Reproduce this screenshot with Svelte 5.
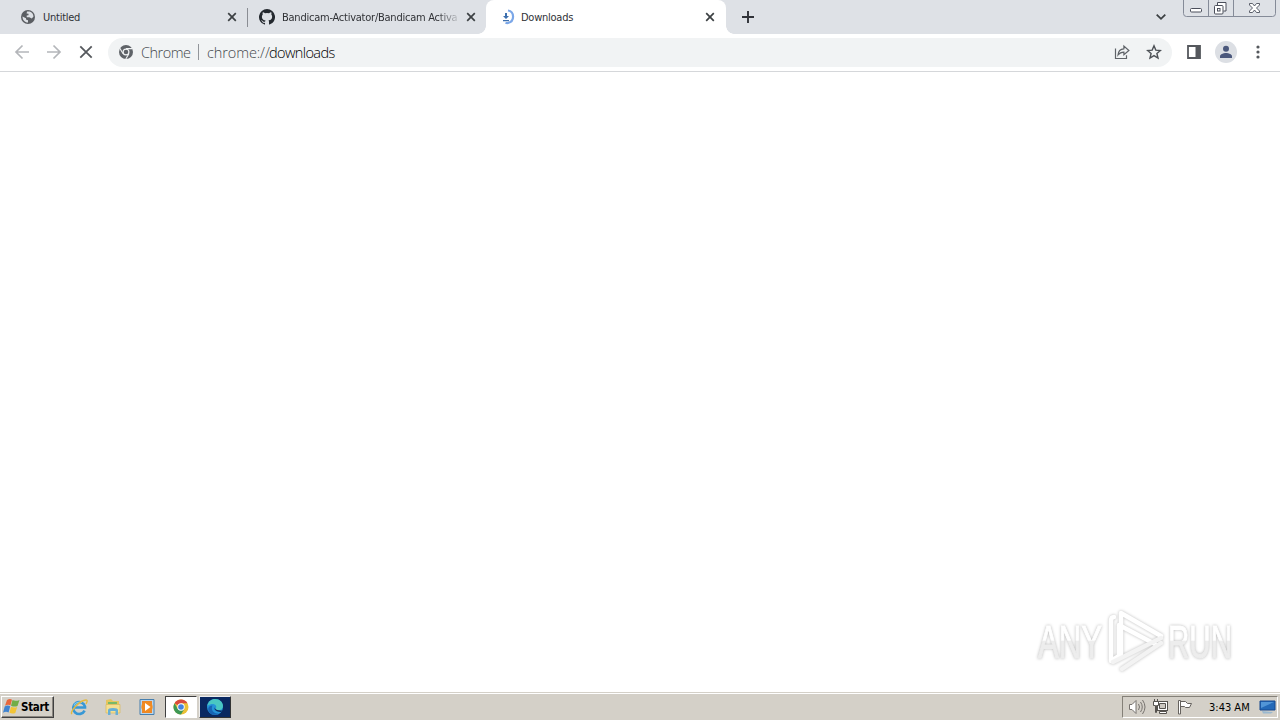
<script>
	const tabs = [
		{ title: 'Untitled', icon: 'globe' },
		{ title: 'Bandicam-Activator/Bandicam Activa', icon: 'github' },
		{ title: 'Downloads', icon: 'loading', active: true },
	];
	const url = { scheme: 'chrome://', page: 'downloads' };
	const time = '3:43 AM';
</script>

<div class="screen">
	<header class="tabs">
		{#each tabs as tab}
			<div class="tab {tab.icon}" class:active={tab.active}>
				<svg class="favicon" width="16" height="16" viewBox="0 0 16 16">
					{#if tab.icon === 'globe'}
						<circle cx="8" cy="8" r="7" fill="#5b5e63" />
						<path
							d="M2.5 7.5 6 9.3v1.2l2 .8v2.2C4.8 13.5 2.5 11 2.5 7.5ZM7 2.6l2.7-.1c2.2.8 3.6 2.5 3.8 5l-1.7 1.9-2.5-1.2H6.7V6.6l1.8-.4V4.7L6.6 4.4Z"
							fill="#dee1e6"
						/>
					{:else if tab.icon === 'github'}
						<path
							d="M8 0a8 8 0 0 0-2.53 15.59c.4.07.55-.17.55-.38v-1.34c-2.22.48-2.69-1.07-2.69-1.07-.36-.92-.89-1.17-.89-1.17-.73-.5.05-.49.05-.49.8.06 1.23.83 1.23.83.71 1.22 1.87.87 2.33.66.07-.52.28-.87.5-1.07-1.77-.2-3.63-.89-3.63-3.95 0-.87.31-1.59.82-2.15-.08-.2-.36-1.01.08-2.12 0 0 .67-.21 2.2.82a7.6 7.6 0 0 1 4 0c1.53-1.03 2.2-.82 2.2-.82.44 1.11.16 1.92.08 2.12.51.56.82 1.28.82 2.15 0 3.07-1.87 3.75-3.65 3.95.29.25.54.73.54 1.48v2.17c0 .21.15.46.55.38A8 8 0 0 0 8 0Z"
							fill="#24292f"
						/>
					{:else}
						<path d="M8 1.5c6.5 1 7 11 0 12.5q-1.3.2-2.5-.3" fill="none" stroke="#7ba7e8" stroke-width="2.2" />
						<path d="M5 4h2v3h2l-3 3-3-3h2ZM3 11h6v1.2H3Z" fill="#3c6fae" />
					{/if}
				</svg>
				<span class="title">{tab.title}</span>
				<svg class="close" width="10" height="10" viewBox="0 0 10 10">
					<path d="m1.2 1.2 7.6 7.6m0-7.6L1.2 8.8" stroke="#3c4043" stroke-width="1.7" />
				</svg>
			</div>
		{/each}
		<svg class="plus" width="14" height="14" viewBox="0 0 14 14">
			<path d="M7 1v12M1 7h12" stroke="#303238" stroke-width="1.9" />
		</svg>
		<svg class="chevron" width="12" height="8" viewBox="0 0 12 8">
			<path d="m1.7 1.6 4.3 4.2 4.3-4.2" fill="none" stroke="#3c4043" stroke-width="1.8" />
		</svg>
		<div class="window-buttons">
			<svg width="93" height="17" viewBox="0 0 93 17" fill="none" stroke="#4b4f5b">
				<path d="M.5 0v13.5q0 3 3 3h86q3 0 3-3V0" stroke="#858b98" />
				<path d="M25.5 0v16M50.5 0v16" stroke="#858b98" />
				<rect x="7.5" y="8.5" width="11" height="3.5" rx="1" fill="#fff" />
				<path d="M34.5 5V2.5h8.5v8.5h-2.5" fill="#fff" />
				<rect x="31.5" y="5.5" width="8.5" height="8.5" rx="1" fill="#fff" />
				<rect x="34.5" y="8.5" width="2.5" height="2.5" />
				<path
					d="M66.5 3.5h3l2 2.5 2-2.5h3V5l-3 3 3 3v1.5h-3l-2-2.5-2 2.5h-3V11l3-3-3-3Z"
					fill="#fff"
					stroke-width=".9"
				/>
			</svg>
		</div>
	</header>

	<nav class="toolbar">
		<div class="nav-icons">
			<svg width="16" height="16" viewBox="0 0 16 16" fill="none" stroke="#b4b6ba" stroke-width="1.7">
				<path d="M15 8H2m6.5-6.5L2 8l6.5 6.5" />
			</svg>
			<svg width="16" height="16" viewBox="0 0 16 16" fill="none" stroke="#b4b6ba" stroke-width="1.7">
				<path d="M1 8h13M7.5 1.5 14 8l-6.5 6.5" />
			</svg>
			<svg width="16" height="16" viewBox="0 0 16 16" fill="none" stroke="#55585d" stroke-width="1.8">
				<path d="m2.3 2.3 11.4 11.4m0-11.4L2.3 13.7" />
			</svg>
		</div>
		<div class="address">
			<svg class="origin" width="14" height="14" viewBox="0 0 14 14">
				<circle cx="7" cy="7" r="7" fill="#5f6368" />
				<path d="M7 3.6h6.5M4.1 8.7.8 3.2m9.1 5.5L6.8 14" stroke="#f1f3f4" stroke-width="1.1" />
				<circle cx="7" cy="7" r="2.9" fill="#5f6368" stroke="#f1f3f4" stroke-width="1.2" />
			</svg>
			<span class="label">Chrome</span>
			<span class="rule"></span>
			<span class="scheme">{url.scheme}</span><span class="page">{url.page}</span>
			<svg class="share" width="16" height="16" viewBox="0 0 16 16" fill="none" stroke="#5f6368" stroke-width="1.2">
				<path d="M1.5 4.5v10h11v-3.3M4 11c.3-4 2.2-6 5.9-6.2V2l5 4.5-5 4.3V8.1C7.3 8.1 5.5 9 4 11Z" />
			</svg>
			<svg class="star" width="16" height="16" viewBox="0 0 16 16" fill="none" stroke="#4d5156" stroke-width="1.4">
				<path d="m8 1.8 1.8 4.3 4.6.4-3.5 3 1.1 4.5-4-2.4L4 14l1.1-4.5-3.5-3 4.6-.4Z" />
			</svg>
		</div>
		<svg class="panel" width="14" height="14" viewBox="0 0 14 14">
			<path d="M1 1h12v12H1Z" fill="none" stroke="#55585d" stroke-width="1.8" />
			<path d="M8.5 1H13v12H8.5Z" fill="#55585d" />
		</svg>
		<svg class="avatar" width="22" height="22" viewBox="0 0 22 22">
			<circle cx="11" cy="11" r="11" fill="#dcdfe4" />
			<circle cx="11" cy="7.8" r="3" fill="#4b587c" />
			<path d="M5 17v-1.7c0-2 3.5-3.3 6-3.3s6 1.3 6 3.3V17Z" fill="#4b587c" />
		</svg>
		<svg class="more" width="4" height="14" viewBox="0 0 4 14" fill="#55585d">
			<circle cx="2" cy="2" r="1.6" />
			<circle cx="2" cy="7" r="1.6" />
			<circle cx="2" cy="12" r="1.6" />
		</svg>
	</nav>

	<main>
		<svg class="watermark" width="206" height="72" viewBox="0 0 206 72">
			<defs>
				<linearGradient id="shade" x1="0" y1="0" x2="0" y2="72" gradientUnits="userSpaceOnUse">
					<stop offset=".49" stop-color="#fff" />
					<stop offset=".5" stop-color="#ededed" />
				</linearGradient>
			</defs>
			<g class="letters" fill="url(#shade)" stroke="url(#shade)">
				<text x="5" y="53" textLength="64" lengthAdjust="spacingAndGlyphs">ANY</text>
				<text x="135" y="53" textLength="64" lengthAdjust="spacingAndGlyphs">RUN</text>
			</g>
			<g class="mark" fill="none" stroke="#fff" stroke-width="4.5" stroke-linejoin="round" stroke-linecap="round">
				<path d="M88 49V8l40 23" />
				<path d="M81 12q-3 0-3 4v40l8-5V20l36 19" />
				<path d="M128 33 80 57m48-19L89 64" stroke="#f3f3f3" />
			</g>
		</svg>
	</main>

	<footer class="taskbar">
		<button class="start">
			<svg width="18" height="17" viewBox="0 0 18 17">
				<path d="M4 2q3-2 5-.3L7.4 7.5Q5 6 2 7.8Z" fill="#e7673c" />
				<path d="M9.5 2q3 1.7 7-.1l-2 6q-3 1.5-6.500-.2Z" fill="#72ad47" />
				<path d="M1.7 8.5q3-1.7 5.5-.2l-1.6 6.300q-2.500-1.800-5.600.1Z" fill="#3f83d0" />
				<path d="M8 8.700q3 1.5 6.200.2l-1.900 6.100q-3 1.3-5.800-.2Z" fill="#f2c437" />
			</svg>
			Start
		</button>
		<div class="quick">
			<svg width="18" height="18" viewBox="0 0 18 18" fill="none">
				<path d="M14.6 12.6A6 6 0 1 1 15 8.5v1H5" stroke="#3898d5" stroke-width="2.6" />
				<path d="M4 7.5a6 5 0 0 1 8-3" stroke="#7ccbf2" stroke-width="1.2" />
				<path d="M2 16C-1 14 10 2 16 2c2 0 1 2 0 4" stroke="#e4b93d" stroke-width="1.4" />
			</svg>
			<svg width="18" height="18" viewBox="0 0 18 18">
				<path d="M2 2 7 1l2 2h6v10H2Z" fill="#e6c65e" />
				<path d="M4 4h9v2H4Z" fill="#79b968" />
				<path d="M2 6.5h14V15H2Z" fill="#f5df91" stroke="#d8b95d" stroke-width=".7" />
				<path d="M4 17v-5q0-2 5-2t5 2v5h-2.5v-4h-5v4Z" fill="#68afd5" />
			</svg>
			<svg width="18" height="18" viewBox="0 0 18 18">
				<path d="M2 1.5h14v15H2Z" fill="#b9d6ec" stroke="#477fae" />
				<path d="M4 3h10v12H4Z" fill="#e9852b" />
				<circle cx="9" cy="9" r="5.7" fill="#f18b21" />
				<path d="m7 5 5.5 4L7 13Z" fill="#fff" />
			</svg>
		</div>
		<div class="task chrome-task">
			<svg width="16" height="16" viewBox="0 0 16 16">
				<circle cx="8" cy="8" r="7.5" fill="#eac036" />
				<path d="M8 8 1.5 4.25A7.5 7.5 0 0 1 14.5 4.25H8Z" fill="#d94b3d" />
				<path d="M1.5 4.25A7.5 7.5 0 0 0 8 15.5L11.3 9.9 4.8 9.9Z" fill="#3d9855" />
				<circle cx="8" cy="8" r="3.7" fill="#fff" />
				<circle cx="8" cy="8" r="2.8" fill="#4383df" />
			</svg>
		</div>
		<div class="task edge-task">
			<svg width="18" height="18" viewBox="0 0 18 18">
				<circle cx="9" cy="9" r="8" fill="#2593d8" />
				<path d="M1.2 8C2.5 3 5.5 1 9 1c5 0 8 3.4 8 7 0 3-2.600 4.600-5.700 4.300-1.800-.2-2.100-.9-1.300-2 1.500-2.800-2.500-6.500-8.800-2.300Z" fill="#49c7c2" />
				<path d="M6.500 7.500c-2 4 .5 8 6.500 8.200-5.600 3-10.500-.2-10.800-4.500-.1-2 1.500-3.700 4.300-3.700Z" fill="#1764b4" />
				<path d="M9.500 8.300c-2 1.800.5 4.900 7 4.100l-1.500 1.500c-4 .3-8.500-2.300-5.500-5.600Z" fill="#0b2a60" />
			</svg>
		</div>
		<div class="tray">
			<svg width="18" height="16" viewBox="0 0 18 16" fill="none" stroke="#77736f">
				<path d="M1.5 5.5H4l4-4v13l-4-4H1.5Z" fill="#fff" />
				<path d="M10.5 5q2 3 0 6M12.5 3q3.5 5 0 10M14.5 1q5 7 0 14" />
			</svg>
			<svg width="18" height="16" viewBox="0 0 18 16" fill="none" stroke="#55524e">
				<rect x="5.5" y="2.5" width="10" height="9" fill="#fff" />
				<path d="M7.5 4.5h6v5h-6Z" fill="#ccc8c1" />
				<path d="M7.500 14.500v-2h7v2ZM1.5 2.5h5v4h-2v7h-1v-7h-2ZM2.500 0v2m3-2v2" fill="#fff" />
			</svg>
			<svg width="18" height="16" viewBox="0 0 18 16" fill="#fff" stroke="#66625e">
				<path d="M2.500 15V1.500h2V15ZM4.500 2.500h5l2 2h4l-2 4h-4l-1-1h-4Z" />
			</svg>
			<span class="time">{time}</span>
			<svg class="desktop" width="17" height="14" viewBox="0 0 17 14">
				<path d="M1 1h15v9H1Z" fill="#2469b8" stroke="#17488f" />
				<path d="M2 2h13L2 8Z" fill="#5295d7" />
				<path d="m3 11 11 1-2 1.5H4Z" fill="#9ab8cf" />
			</svg>
		</div>
	</footer>
</div>

<style>
	:global(body) {
		margin: 0;
	}

	.screen {
		display: flex;
		flex-direction: column;
		width: 1280px;
		height: 720px;
		overflow: hidden;
		background: #fff;
		font-family: 'DejaVu Sans Condensed', 'DejaVu Sans', sans-serif;
		font-size: 11px;
		color: #303236;
	}

	svg {
		display: block;
		flex-shrink: 0;
	}

	.tabs {
		display: flex;
		height: 34px;
		background: #dee1e6;
	}

	.tab {
		display: flex;
		align-items: center;
		box-sizing: border-box;
		position: relative;
		height: 34px;
	}

	.globe {
		width: 248px;
		padding: 0 11px 0 20px;
	}

	.globe::after {
		content: '';
		position: absolute;
		right: 0;
		top: 8px;
		width: 1px;
		height: 19px;
		background: #8a8d93;
	}

	.github {
		width: 238px;
		padding: 0 10px 0 11px;
	}

	.active {
		width: 240px;
		padding: 0 11px 0 14px;
		background: #fff;
		border-radius: 8px 8px 0 0;
	}

	.active::before,
	.active::after {
		content: '';
		position: absolute;
		bottom: 0;
		left: -8px;
		width: 8px;
		height: 8px;
		background: radial-gradient(circle at 0 0, transparent 7.5px, #fff 8px);
	}

	.active::after {
		left: auto;
		right: -8px;
		background: radial-gradient(circle at 100% 0, transparent 7.5px, #fff 8px);
	}

	.title {
		flex: 1;
		min-width: 0;
		margin: 0 8px 0 7px;
		white-space: nowrap;
		letter-spacing: -0.25px;
	}

	.github .title {
		letter-spacing: -0.24px;
		mask-image: linear-gradient(90deg, #000 88%, rgba(0, 0, 0, 0.15));
	}

	.active .title {
		margin-left: 5px;
	}

	.plus {
		margin: 10px 0 0 15px;
	}

	.chevron {
		margin: 13px 16px 0 auto;
	}

	.window-buttons {
		width: 93px;
		margin-right: 4px;
	}

	.toolbar {
		display: flex;
		align-items: center;
		box-sizing: border-box;
		height: 38px;
		padding: 0 20px 1px 14px;
		border-bottom: 1px solid #d5d7da;
	}

	.nav-icons {
		display: flex;
		gap: 16px;
	}

	.address {
		display: flex;
		align-items: center;
		box-sizing: border-box;
		width: 1064px;
		height: 29px;
		margin-left: 14px;
		padding: 0 10px 0 11px;
		border-radius: 15px;
		background: #f1f3f4;
		font-family: 'Open Sans', 'Noto Sans', sans-serif;
		font-weight: 300;
		font-size: 14.5px;
		line-height: 20px;
		color: #44484d;
	}

	.label,
	.scheme,
	.page {
		padding-top: 1px;
	}

	.label {
		width: 50px;
		margin-left: 8px;
		letter-spacing: -0.5px;
	}

	.rule {
		width: 1px;
		height: 16px;
		margin: 0 8px 0 7px;
		background: #92959a;
	}

	.scheme {
		width: 62px;
		letter-spacing: -0.1px;
	}

	.page {
		color: #000;
		letter-spacing: -0.6px;
	}

	.share {
		margin-left: auto;
	}

	.star {
		margin-left: 16px;
	}

	.panel {
		margin-left: 15px;
	}

	.avatar {
		margin-left: 14px;
	}

	.more {
		margin-left: auto;
	}

	main {
		display: flex;
		flex: 1;
		align-items: flex-end;
		justify-content: flex-end;
		padding: 0 41px 15px 0;
	}

	.watermark {
		overflow: visible;
	}

	.letters {
		font: 46px 'Liberation Sans', sans-serif;
		filter: drop-shadow(0 0 1.5px #b8b8b8);
	}

	.mark {
		filter: drop-shadow(0 0 1.5px #bbb);
	}

	.taskbar {
		display: flex;
		align-items: center;
		box-sizing: border-box;
		height: 28px;
		padding: 1px 2px 0 1px;
		border-top: 1px solid #d4d0c8;
		box-shadow: inset 0 1px #fff;
		background: #d4d0c8;
	}

	.start {
		display: flex;
		align-items: center;
		box-sizing: border-box;
		width: 53px;
		height: 22px;
		padding: 0 1px 1px;
		border: 1px solid;
		border-color: #fff #404040 #404040 #fff;
		box-shadow: inset -1px -1px #8a8680;
		background: #d4d0c8;
		font: bold 11.5px 'DejaVu Sans Condensed', sans-serif;
		letter-spacing: -0.3px;
		color: #000;
	}

	.quick {
		display: flex;
		gap: 16px;
		margin-left: 16px;
	}

	.task {
		display: flex;
		align-items: center;
		justify-content: center;
		box-sizing: border-box;
		width: 32px;
		height: 22px;
		border: 1px solid;
	}

	.chrome-task {
		margin-left: 9px;
		background: #fff;
		border-color: #404040 #fff #fff #404040;
	}

	.edge-task {
		margin-left: 2px;
		background: #0a2860;
		border-color: #eee #333 #333 #eee;
	}

	.tray {
		display: flex;
		align-items: center;
		box-sizing: border-box;
		width: 156px;
		height: 22px;
		margin-left: auto;
		padding: 0 1px 0 5px;
		gap: 6px;
		border: 1px solid;
		border-color: #848078 #fff #fff #848078;
		color: #000;
	}

	.time {
		margin-left: 9px;
		white-space: nowrap;
	}

	.desktop {
		margin-left: auto;
	}
</style>
